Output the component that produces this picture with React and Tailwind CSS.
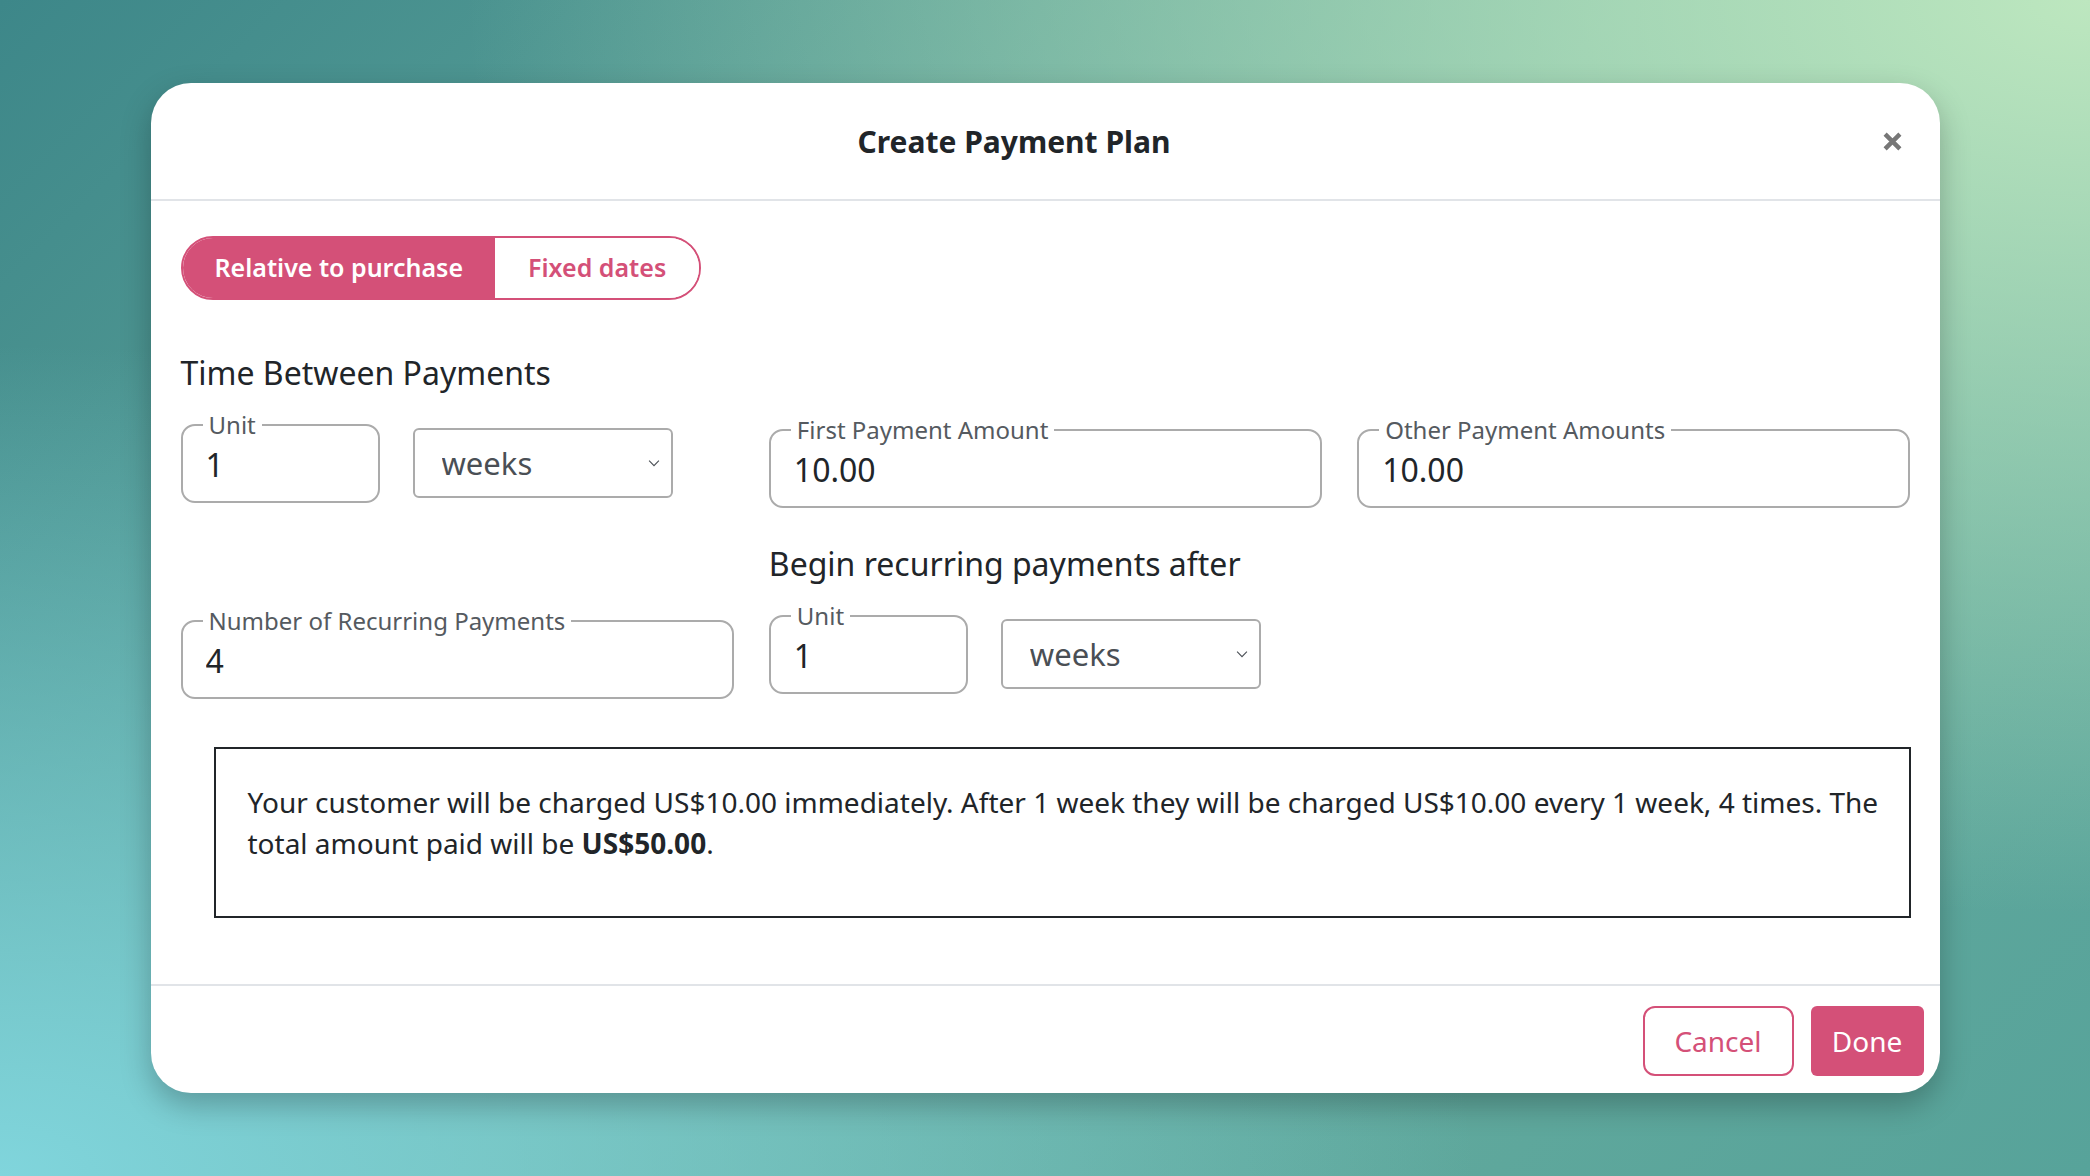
import { useState } from "react";

function OutlinedField({ label, value, className = "" }) {
  return (
    <fieldset
      className={`border-2 border-[#ababab] rounded-[14px] pl-[20px] pr-[20px] min-w-0 ${className}`}
    >
      <legend className="px-[6px] text-[24px] leading-[24px] text-[#555a60]">
        {label}
      </legend>
      <input
        type="text"
        defaultValue={value}
        className="w-full h-[64px] pb-[9px] bg-transparent outline-none text-[32px] text-[#212529] pl-[3px]"
      />
    </fieldset>
  );
}

function UnitSelect({ className = "" }) {
  return (
    <div className={`relative w-[260px] h-[70px] ${className}`}>
      <select
        defaultValue="weeks"
        className="appearance-none w-full h-full border-2 border-[#ababab] rounded-[6px] bg-white pl-[27px] text-[31px] text-[#4a4f55] outline-none"
      >
        <option value="days">days</option>
        <option value="weeks">weeks</option>
        <option value="months">months</option>
      </select>
      {/* chevron */}
      <svg
        viewBox="0 0 16 10"
        className="absolute right-[13px] top-[32px] w-[12px] h-[7px] pointer-events-none"
        fill="none"
        stroke="#4a4f55"
        strokeWidth="1.6"
      >
        <path d="M1 1l7 7 7-7" />
      </svg>
    </div>
  );
}

export default function App() {
  const [mode, setMode] = useState("relative");

  return (
    <div className="min-h-screen w-full flex items-center justify-center font-['Noto_Sans',sans-serif] bg-[radial-gradient(ellipse_at_100%_0%,#bde7bf_0%,rgba(189,231,191,0)_55%),radial-gradient(ellipse_at_0%_100%,#80d5dc_0%,rgba(128,213,220,0)_50%),linear-gradient(135deg,#3d8789_0%,#6aae9f_50%,#57a39a_100%)]">
      <div className="w-[1789px] h-[1010px] bg-white rounded-[40px] shadow-[0_12px_30px_rgba(0,0,0,0.25)] flex flex-col overflow-hidden">
        {/* Header */}
        <div className="h-[118px] shrink-0 flex items-center pr-[36px] border-b-2 border-[#e1e4e8]">
          <h1 className="flex-1 text-center text-[30px] font-bold text-[#212529]">Create Payment Plan</h1>
          <button className="p-[2px] ml-[3px]">
            <svg viewBox="0 0 18 18" className="w-[19px] h-[19px]" stroke="#777" strokeWidth="4.2">
              <path d="M2 2L16 16M16 2L2 16" />
            </svg>
          </button>
        </div>

        {/* Body */}
        <div className="flex-1 pl-[30px] pr-[29px] pt-[35px]">
          <div className="inline-flex h-[64px] border-2 border-[#d45078] rounded-full overflow-hidden">
            <button
              onClick={() => setMode("relative")}
              className={`px-[32px] text-[25px] font-semibold ${
                mode === "relative" ? "bg-[#d45078] text-white" : "bg-white text-[#d45078]"
              }`}
            >
              Relative to purchase
            </button>
            <button
              onClick={() => setMode("fixed")}
              className={`px-[33px] text-[25px] font-semibold ${
                mode === "fixed" ? "bg-[#d45078] text-white" : "bg-white text-[#d45078]"
              }`}
            >
              Fixed dates
            </button>
          </div>

          <h2 className="mt-[50px] text-[32px] leading-[45px] text-[#212529]">Time Between Payments</h2>

          <div className="mt-[18px] grid grid-cols-3 gap-x-[35px] items-start">
            <div className="flex items-start gap-[33px]">
              <OutlinedField label="Unit" value="1" className="w-[199px]" />
              <UnitSelect className="mt-[15px]" />
            </div>
            <OutlinedField label="First Payment Amount" value="10.00" className="mt-[5px]" />
            <OutlinedField label="Other Payment Amounts" value="10.00" className="mt-[5px]" />
          </div>

          <div className="mt-[33px] grid grid-cols-3 gap-x-[35px] items-start">
            <OutlinedField label="Number of Recurring Payments" value="4" className="mt-[68px]" />
            <div className="col-span-2">
              <h2 className="text-[32px] leading-[45px] text-[#212529]">Begin recurring payments after</h2>
              <div className="mt-[18px] flex items-start gap-[33px]">
                <OutlinedField label="Unit" value="1" className="w-[199px]" />
                <UnitSelect className="mt-[15px]" />
              </div>
            </div>
          </div>

          <div className="mt-[48px] ml-[33px] h-[171px] border-2 border-[#212529] pl-[32px] pr-[24px] pt-[33px]">
            <p className="text-[28px] leading-[41px] text-[#212529]">
              Your customer will be charged US$10.00 immediately. After 1 week they will be charged US$10.00 every 1
              week, 4 times. The total amount paid will be <strong className="font-bold">US$50.00</strong>.
            </p>
          </div>
        </div>

        {/* Footer */}
        <div className="shrink-0 border-t-2 border-[#e1e4e8] flex justify-end gap-[17px] pt-[20px] pb-[17px] pr-[16px]">
          <button className="w-[151px] h-[70px] border-2 border-[#d45078] rounded-[12px] text-[28px] text-[#d45078]">
            Cancel
          </button>
          <button className="w-[113px] h-[70px] bg-[#d45078] rounded-[6px] text-[28px] text-white">Done</button>
        </div>
      </div>
    </div>
  );
}
